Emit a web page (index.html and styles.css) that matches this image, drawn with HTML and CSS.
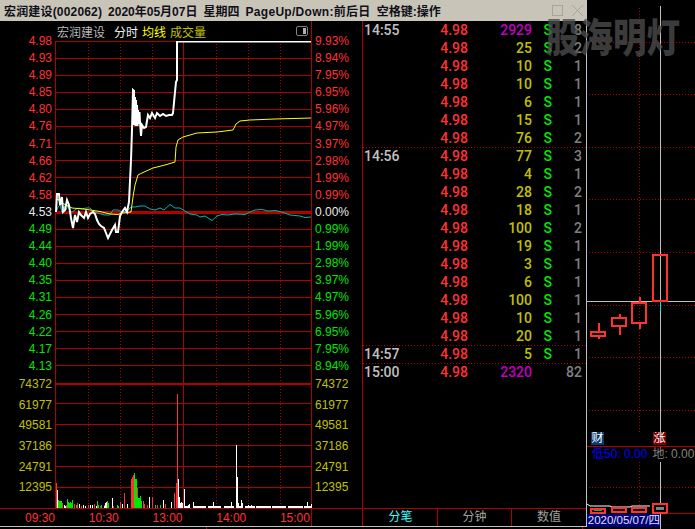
FILE: index.html
```html
<!DOCTYPE html>
<html lang="zh-CN">
<head>
  <meta charset="UTF-8">
  <meta name="viewport" content="width=device-width, initial-scale=1.0">
  <title>宏润建设 分时</title>
  <link rel="stylesheet" href="styles.css">
</head>
<body>
  <div class="app">
    <div class="left-side">
      <div class="titlebar">
        <span class="stock-name">宏润建设(002062)</span>
        <span>2020年05月07日</span>
        <span>星期四</span>
        <span class="page-keys">PageUp/Down:前后日</span>
        <span>空格键:操作</span>
        <div class="win-btns">
          <svg width="35" height="12" viewBox="0 0 35 12">
            <rect x="0.5" y="0.5" width="10" height="10" fill="none" stroke="#a8a49a"/>
            <path d="M20 0L31 11M31 0L20 11" stroke="#a8a49a" fill="none"/>
          </svg>
        </div>
      </div>

      <div class="main">
        <div class="chart-panel">
          <div class="chart-head">
            <span class="head-name">宏润建设</span>
            <span class="head-mode">分时</span>
            <span class="head-avg">均线</span>
            <span class="head-vol">成交量</span>
            <span class="head-toggle"><i></i></span>
          </div>
          <div class="chart-body">
            <div class="scale scale-left">
              <div class="prices">
                <div class="up">4.98</div><div class="up">4.93</div><div class="up">4.89</div><div class="up">4.85</div>
                <div class="up">4.80</div><div class="up">4.76</div><div class="up">4.71</div><div class="up">4.66</div>
                <div class="up">4.62</div><div class="up">4.58</div><div class="flat">4.53</div><div class="down">4.49</div>
                <div class="down">4.44</div><div class="down">4.40</div><div class="down">4.35</div><div class="down">4.31</div>
                <div class="down">4.26</div><div class="down">4.22</div><div class="down">4.17</div><div class="down">4.13</div>
              </div>
              <div class="volumes">
                <div>74372</div><div>61977</div><div>49581</div><div>37186</div><div>24791</div><div>12395</div>
              </div>
            </div>

            <svg class="plot" width="257" height="467" viewBox="55 41 257 467">
              <!-- grid -->
              <path class="grid" d="M55.5 41V508M311.5 41V508M183.5 41V508
                M55 41.5H311M55 58.5H311M55 75.5H311M55 92.5H311M55 109.5H311M55 126.5H311M55 143.5H311M55 160.5H311M55 177.5H311M55 194.5H311
                M55 229.5H311M55 246.5H311M55 263.5H311M55 280.5H311M55 297.5H311M55 314.5H311M55 331.5H311M55 348.5H311M55 365.5H311
                M55 403.5H311M55 424.5H311M55 445.5H311M55 466.5H311M55 487.5H311"/>
              <path class="grid-zero" d="M55 212.5H311"/>
              <path class="grid-top" d="M55 384H311"/>
              <path class="grid-dots" d="M88.5 41V508M120.5 41V508M152.5 41V508M216.5 41V508M248.5 41V508M280.5 41V508"/>

              <!-- price, avg, index -->
              <polyline class="line-index" points="56,212 58,207 60,205 62,212 64,206 66,210 68,205 70,212 72,212 75,210 78,208 82,209 86,208 90,208 93,211 97,213 101,214 105,215 110,215 113,210 118,210 122,212 127,211 131,207 135,207 140,206 145,206 150,209 155,210 160,208 164,210 170,204.5 175,208 180,208 185,211 190,214 197,215 200,217 205,216 212,220.5 217,216 222,214.5 228,215 235,214 245,214.5 250,212 255,210 262,209.5 268,211 275,210.5 282,212 290,215 300,216 305,217.5 311,217"/>
              <polyline class="line-avg" points="56,200 58,199 60,202 66,205 72,208 78,208.5 84,209 90,210 100,211.5 110,214 118,214.5 122,213 128,212.5 131,212 133,197 135,185 138,175 143,172.5 153,168 165,165 175,162 176,147 178,140 183,137 197,133 217,132 233,130 236,124 240,121 250,120 275,119 311,118"/>
              <polyline class="line-price" points="56,212 57,194 59,194 60,205 62,197 63,212 65,210 67,200 69,205 71,218 73,228 75,215 77,222 79,212 81,215 84,218 86,212 88,218 90,214 93,212 95,214 97,220 99,224 101,226 104,228 106,233 108,238 110,234 112,230 115,225 116,232 118,232 120,216 122,212 125,208 127,212 129,202 131,160 132,130 133,90 134,91 134,125 135,97 135.5,126 136,100 136.5,124 137,105 137.5,126 138,110 139,124 139.5,112 140,122 141,136 142,125 144,128 146,127 148,115 150,118 152,113 155,118 157,113 160,116 163,114 166,116 169,115 172,115 173,113 175,92 176,82 177,80 177,41 179,41.5 311,41.5"/>

              <!-- volume bars -->
              <path class="bar-red" d="M56.5 508V483M62.5 508V503M66.5 508V505M74.5 508V504M77.5 508V503M81.5 508V506M88.5 508V505M94.5 508V504M100.5 508V506M104.5 508V505M113.5 508V506M120.5 508V502M124.5 508V493M131.5 508V479M132.5 508V477M133.5 508V475M137.5 508V488M143.5 508V501M144.5 508V504M147.5 508V505M152.5 508V497M157.5 508V505M171.5 508V505M174.5 508V493M176.5 508V483M177.5 508V394M165.5 508V504"/>
              <path class="bar-green" d="M58.5 508V500M59.5 508V501M60.5 508V501M61.5 508V501M67.5 508V499M68.5 508V502M69.5 508V503M70.5 508V502M71.5 508V503M72.5 508V500M76.5 508V505M97.5 508V501M98.5 508V505M101.5 508V505M107.5 508V501M108.5 508V503M117.5 508V505M118.5 508V506M134.5 508V473M135.5 508V479M136.5 508V479M137.5 508V497M138.5 508V498M139.5 508V498M140.5 508V496M141.5 508V501M149.5 508V504M155.5 508V505M160.5 508V505"/>
              <path class="bar-white" d="M57.5 508V490M64.5 508V505M65.5 508V506M79.5 508V504M83.5 508V505M85.5 508V506M90.5 508V505M92.5 508V505M96.5 508V506M104.5 508V506M105.5 508V503M106.5 508V502M112.5 508V498M122.5 508V504M127.5 508V504M149.5 508V497M163.5 508V500M171.5 508V502M178.5 508V479M179.5 508V497M180.5 508V503M181.5 508V502M182.5 508V503M184.5 508V489M188.5 508V505M189.5 508V504M193.5 508V502M213.5 508V502M231.5 508V502M236.5 508V445M237.5 508V477M238.5 508V503M241.5 508V500M242.5 508V503M248.5 508V505M251.5 508V505M268.5 508V506M273.5 508V506M289.5 508V506M299.5 508V506M307.5 508V502M311.5 508V504"/>
              <path class="bar-base" d="M185 507H190M193 507H206M208 507H221M224 507H234M236 507H243M245 507H255M256 507H271M272 507H286M288 507H303M304 507H311"/>
            </svg>

            <div class="scale scale-right">
              <div class="prices">
                <div class="up">9.93%</div><div class="up">8.94%</div><div class="up">7.95%</div><div class="up">6.95%</div>
                <div class="up">5.96%</div><div class="up">4.97%</div><div class="up">3.97%</div><div class="up">2.98%</div>
                <div class="up">1.99%</div><div class="up">0.99%</div><div class="flat">0.00%</div><div class="down">0.99%</div>
                <div class="down">1.99%</div><div class="down">2.98%</div><div class="down">3.97%</div><div class="down">4.97%</div>
                <div class="down">5.96%</div><div class="down">6.95%</div><div class="down">7.95%</div><div class="down">8.94%</div>
              </div>
              <div class="volumes">
                <div>74372</div><div>61977</div><div>49581</div><div>37186</div><div>24791</div><div>12395</div>
              </div>
            </div>
          </div>
          <div class="time-axis">
            <div class="times">
              <span>09:30</span><span>10:30</span><span>13:00</span><span>14:00</span><span>15:00</span>
            </div>
          </div>
        </div>

        <div class="trades">
          <div class="trade-list">
            <div class="row"><span class="t">14:55</span><span class="p">4.98</span><span class="v big">2929</span><span class="s">S</span><span class="n">8</span></div>
            <div class="row"><span class="t"></span><span class="p">4.98</span><span class="v">25</span><span class="s">S</span><span class="n">2</span></div>
            <div class="row"><span class="t"></span><span class="p">4.98</span><span class="v">10</span><span class="s">S</span><span class="n">1</span></div>
            <div class="row"><span class="t"></span><span class="p">4.98</span><span class="v">10</span><span class="s">S</span><span class="n">1</span></div>
            <div class="row"><span class="t"></span><span class="p">4.98</span><span class="v">6</span><span class="s">S</span><span class="n">1</span></div>
            <div class="row"><span class="t"></span><span class="p">4.98</span><span class="v">15</span><span class="s">S</span><span class="n">1</span></div>
            <div class="row"><span class="t"></span><span class="p">4.98</span><span class="v">76</span><span class="s">S</span><span class="n">2</span></div>
            <div class="row minute"><span class="t">14:56</span><span class="p">4.98</span><span class="v">77</span><span class="s">S</span><span class="n">3</span></div>
            <div class="row"><span class="t"></span><span class="p">4.98</span><span class="v">4</span><span class="s">S</span><span class="n">1</span></div>
            <div class="row"><span class="t"></span><span class="p">4.98</span><span class="v">28</span><span class="s">S</span><span class="n">2</span></div>
            <div class="row"><span class="t"></span><span class="p">4.98</span><span class="v">18</span><span class="s">S</span><span class="n">1</span></div>
            <div class="row"><span class="t"></span><span class="p">4.98</span><span class="v">100</span><span class="s">S</span><span class="n">2</span></div>
            <div class="row"><span class="t"></span><span class="p">4.98</span><span class="v">19</span><span class="s">S</span><span class="n">1</span></div>
            <div class="row"><span class="t"></span><span class="p">4.98</span><span class="v">3</span><span class="s">S</span><span class="n">1</span></div>
            <div class="row"><span class="t"></span><span class="p">4.98</span><span class="v">6</span><span class="s">S</span><span class="n">1</span></div>
            <div class="row"><span class="t"></span><span class="p">4.98</span><span class="v">100</span><span class="s">S</span><span class="n">1</span></div>
            <div class="row"><span class="t"></span><span class="p">4.98</span><span class="v">10</span><span class="s">S</span><span class="n">1</span></div>
            <div class="row"><span class="t"></span><span class="p">4.98</span><span class="v">20</span><span class="s">S</span><span class="n">1</span></div>
            <div class="row minute"><span class="t">14:57</span><span class="p">4.98</span><span class="v">5</span><span class="s">S</span><span class="n">1</span></div>
            <div class="row minute"><span class="t">15:00</span><span class="p">4.98</span><span class="v big">2320</span><span class="s"></span><span class="n">82</span></div>
          </div>
          <div class="tabs">
            <div class="tab active">分笔</div>
            <div class="tab">分钟</div>
            <div class="tab">数值</div>
          </div>
        </div>
      </div>
      <div class="foot"><i class="tick-a"></i><i class="tick-b"></i></div>
    </div>

    <div class="kline">
      <svg class="kline-top" width="108" height="432" viewBox="587 0 108 432">
        <path class="grid-dots" d="M589 42.5H695M589 94.5H695M589 147.5H695M589 199.5H695M589 252.5H695M589 305.5H695M589 357.5H695M589 410.5H695M639.5 8V432"/>
        <path class="cross" d="M587 301.5H695M660.5 6V432"/>
        <path class="candle" d="M598.5 323V331M598.5 337V339M591 332H605V336H591Z
          M619.5 314V318M619.5 326V335M612 318H626V326H612Z
          M639.5 297V303M639.5 323V329M632 303H646V323H632Z
          M653 255H667V301H653Z"/>
        <path class="wick" d="M660.5 302V311"/>
      </svg>
      <div class="badges">
        <span class="badge badge-fin">财</span>
        <span class="badge badge-up">涨</span>
      </div>
      <div class="indicator">
        <span class="ind-low">低50: 0.00</span>
        <span class="ind-ground">地: 0.00</span>
      </div>
      <svg class="kline-bottom" width="108" height="52" viewBox="587 462 108 52">
        <path class="grid-dots" d="M589 487.5H695M639.5 462V505"/>
        <path class="cross" d="M660.5 462V503"/>
        <polyline class="vol-line" points="587,504 590,506 610,506 612,507 630,507 632,506 650,506"/>
        <path class="mini-fill" d="M594 509.5H602"/>
        <path class="mini-box" d="M591 509H605V513H591ZM612 508H626V512H612ZM632 508H646V512H632ZM653 504H667V513H653Z"/>
        <path class="mini-gray" d="M656 508.5H664"/>
        <path class="grid" d="M667 513.5H695"/>
      </svg>
      <div class="date-row"><div class="date-box">2020/05/07/四</div></div>
    </div>
  </div>

  <div class="watermark">股海明灯</div>
</body>
</html>
```

FILE: styles.css
```css
html, body {
  margin: 0;
  padding: 0;
  background: #000;
  overflow: hidden;
}

body {
  position: relative;
  width: 695px;
  height: 529px;
  font-family: "Liberation Sans", "Noto Sans CJK SC", sans-serif;
  font-size: 12px;
  color: #c0c0c0;
}

.app {
  display: flex;
  height: 529px;
}

.left-side {
  width: 587px;
  flex: none;
}

/* title bar */
.titlebar {
  height: 21px;
  background: #c8c4b8;
  color: #101018;
  display: flex;
  align-items: center;
  gap: 6px;
  padding-left: 4px;
  box-sizing: border-box;
  font-weight: bold;
  white-space: nowrap;
}

.stock-name {
  letter-spacing: 0.17px;
}

.page-keys {
  letter-spacing: 0.3px;
}

.win-btns {
  margin-left: auto;
  display: flex;
}

.main {
  display: flex;
  height: 505px;
  border-bottom: 1px solid #c0c0c0;
}

.foot {
  display: flex;
  height: 2px;
}

.foot i {
  display: block;
  width: 1px;
  background: #b00000;
}

.tick-a { margin-left: 206px; }
.tick-b { margin-left: 375px; }

/* left chart */
.chart-panel {
  width: 362px;
  flex: none;
}

.chart-head {
  width: 312px;
  height: 20px;
  box-sizing: border-box;
  border-right: 1px solid #b00000;
  padding-left: 57px;
  display: flex;
  align-items: center;
  white-space: nowrap;
}

.head-name { color: #b8b8b8; }
.head-mode { color: #f0f0f0; margin-left: 9px; }
.head-avg { color: #ffff00; margin-left: 4px; }
.head-vol { color: #c0c000; margin-left: 4px; }

.head-toggle {
  margin-left: auto;
  margin-right: 3px;
  width: 12px;
  height: 10px;
  box-sizing: border-box;
  border: 1px solid #808080;
  border-radius: 2px;
  display: flex;
  justify-content: flex-end;
  padding: 1px;
}

.head-toggle i {
  display: block;
  width: 3px;
  background: #b0b0b0;
}

.chart-body {
  display: flex;
  height: 467px;
}

.plot {
  display: block;
  flex: none;
}

.scale {
  flex: none;
  margin-top: -8px;
  position: relative;
}

.scale-left {
  width: 55px;
  box-sizing: border-box;
  padding-right: 3px;
  text-align: right;
}

.scale-right {
  width: 50px;
  box-sizing: border-box;
  padding-left: 3px;
}

.prices div {
  height: 17.1px;
  line-height: 17.1px;
}

.volumes {
  color: #c0c000;
  margin-top: -1px;
}

.volumes div {
  height: 20.7px;
  line-height: 20.7px;
}

.up { color: #ff3232; }
.flat { color: #e8e8e8; }
.down { color: #00e600; }

.grid, .grid-zero, .grid-top {
  fill: none;
  stroke: #b00000;
  stroke-width: 1;
  shape-rendering: crispEdges;
}

.grid-zero {
  stroke-width: 3;
}

.grid-top {
  stroke-width: 2;
}

.grid-dots {
  fill: none;
  stroke: #b00000;
  stroke-width: 1;
  stroke-dasharray: 1 2;
  shape-rendering: crispEdges;
}

.line-price {
  fill: none;
  stroke: #fff;
  stroke-width: 2;
}

.line-avg {
  fill: none;
  stroke: #ffff00;
  stroke-width: 1;
}

.line-index {
  fill: none;
  stroke: #00b4b4;
  stroke-width: 1;
}

.bar-red, .bar-green, .bar-white {
  fill: none;
  stroke-width: 1;
  shape-rendering: crispEdges;
}

.bar-red { stroke: #ff3232; }
.bar-green { stroke: #00e600; }
.bar-white { stroke: #fff; }

.bar-base {
  fill: none;
  stroke: #fff;
  stroke-width: 2;
  shape-rendering: crispEdges;
}

.time-axis {
  height: 18px;
  box-sizing: border-box;
  border-top: 1px solid #b00000;
}

.times {
  width: 312px;
  height: 17px;
  box-sizing: border-box;
  border-right: 1px solid #b00000;
  padding: 0 1px 0 25px;
  display: flex;
  justify-content: space-between;
  align-items: center;
  color: #ff3232;
}

/* trade list */
.trades {
  width: 225px;
  flex: none;
  box-sizing: border-box;
  border-left: 1px solid #b00000;
  border-right: 1px solid #c0c0c0;
  display: flex;
  flex-direction: column;
}

.trade-list {
  flex: 1;
}

.row {
  display: grid;
  grid-template-columns: 50px 55px 64px 20px 30px;
  height: 18px;
  line-height: 18px;
  font-family: Roboto, "Liberation Sans", sans-serif;
  font-size: 14px;
  font-weight: 500;
}

.row.minute {
  background: linear-gradient(90deg, #b00000 1px, transparent 1px) 0 0 / 3px 1px repeat-x;
}

.row .t { color: #c0c0c0; padding-left: 1px; }
.row .p { color: #ff3232; text-align: right; }
.row .v { color: #c0c000; text-align: right; }
.row .v.big { color: #c000c0; }
.row .s { color: #00e600; text-align: right; }
.row .n { color: #808080; text-align: right; }

.tabs {
  height: 18px;
  box-sizing: border-box;
  border-top: 1px solid #b00000;
  display: grid;
  grid-template-columns: 74px 74px 1fr;
  margin-left: 1px;
}

.tab {
  text-align: center;
  line-height: 17px;
  color: #a0a0a0;
  border-right: 1px solid #b00000;
}

.tab:last-child {
  border-right: none;
}

.tab.active {
  color: #40ffff;
}

/* day candles */
.kline {
  width: 108px;
  flex: none;
  display: flex;
  flex-direction: column;
}

.kline svg {
  display: block;
  flex: none;
}

.cross {
  fill: none;
  stroke: #c0c0c0;
  stroke-width: 1;
  shape-rendering: crispEdges;
}

.candle {
  fill: none;
  stroke: #ff3232;
  stroke-width: 2;
  shape-rendering: crispEdges;
}

.wick {
  fill: none;
  stroke: #00e0e0;
  stroke-width: 1;
  shape-rendering: crispEdges;
}

.badges {
  height: 14px;
  display: flex;
  justify-content: space-between;
  padding: 0 29px 0 4px;
  border-bottom: 1px solid #b00000;
}

.badge {
  width: 13px;
  height: 13px;
  line-height: 13px;
  text-align: center;
  color: #fff;
  overflow: hidden;
}

.badge-fin { background: #0a3a6a; }
.badge-up { background: #800000; }

.indicator {
  height: 15px;
  line-height: 15px;
  padding-left: 5px;
  display: flex;
  gap: 5px;
  white-space: nowrap;
  overflow: hidden;
}

.ind-low { color: #0000ff; }
.ind-ground { color: #808080; }

.vol-line {
  fill: none;
  stroke: #fff;
  stroke-width: 1;
}

.mini-box {
  fill: none;
  stroke: #ff3232;
  stroke-width: 2;
  shape-rendering: crispEdges;
}

.mini-fill {
  fill: none;
  stroke: #00c000;
  stroke-width: 2;
  shape-rendering: crispEdges;
}

.mini-gray {
  fill: none;
  stroke: #808080;
  stroke-width: 3;
  shape-rendering: crispEdges;
}

.date-row {
  width: 74px;
  height: 15px;
  box-sizing: border-box;
  border-right: 1px solid #c0c0c0;
}

.date-box {
  height: 13px;
  line-height: 13px;
  background: #000080;
  color: #e0e0e0;
  font-size: 11.5px;
  text-align: right;
  white-space: nowrap;
}

/* watermark sits over everything */
.watermark {
  position: absolute;
  left: 546px;
  top: 10px;
  font-family: "Noto Sans CJK SC", sans-serif;
  font-size: 33.5px;
  line-height: 50px;
  font-weight: 900;
  color: rgba(76, 76, 76, 0.8);
  white-space: nowrap;
  transform: scaleY(1.18);
  pointer-events: none;
}
```
